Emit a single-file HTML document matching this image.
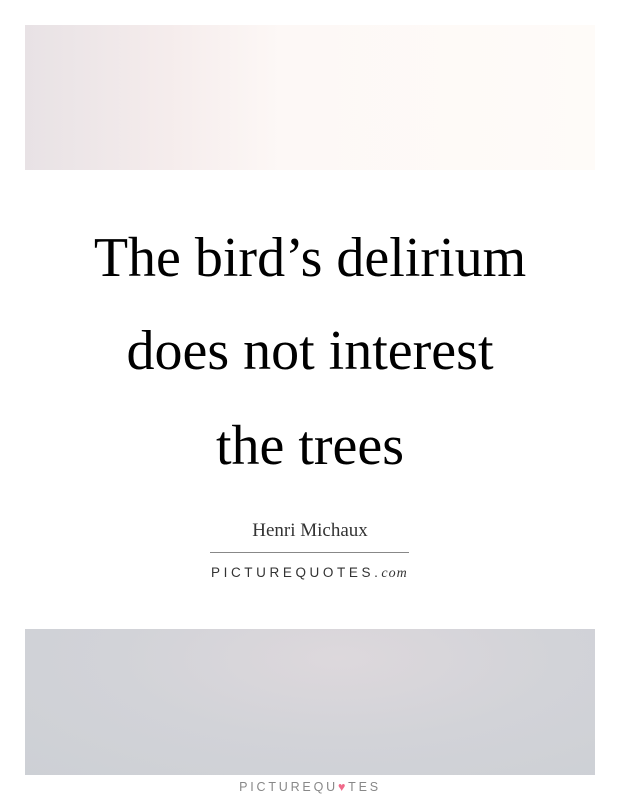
<!DOCTYPE html>
<html><head><meta charset="utf-8"><style>
html,body{margin:0;padding:0;background:#fff;width:620px;height:800px;overflow:hidden;position:relative}
.top{position:absolute;left:25px;top:25px;width:570px;height:145px;background:linear-gradient(90deg,#e8e2e5 0%,#f5ecec 25%,#fdf8f6 45%,#fefbf8 100%)}
.bot{position:absolute;left:25px;top:629px;width:570px;height:146px;background:radial-gradient(ellipse at 55% 20%,#ddd8dc 0%,#d2d3d8 50%,#cdd0d5 100%)}
.q{position:absolute;left:0;width:620px;text-align:center;font-family:"Liberation Serif",serif;font-size:56px;color:#000;line-height:60px}
.a{position:absolute;left:0;width:620px;top:520px;text-align:center;font-family:"Liberation Serif",serif;font-size:19px;color:#333}
.hr{position:absolute;left:210px;width:199px;top:552px;height:1px;background:#888}
.pq{position:absolute;left:211px;top:565px;font-family:"Liberation Sans",sans-serif;font-size:13.5px;letter-spacing:3.6px;color:#333}
.pq i{font-family:"Liberation Serif",serif;font-size:14px;letter-spacing:1px}
.ft{position:absolute;left:0;width:620px;top:780px;text-align:center;font-family:"Liberation Sans",sans-serif;font-size:12.5px;letter-spacing:2.8px;color:#888}
</style></head><body>
<div class="top"></div>
<div class="q" style="top:228px">The bird’s delirium</div>
<div class="q" style="top:321px">does not interest</div>
<div class="q" style="top:416px">the trees</div>
<div class="a">Henri Michaux</div>
<div class="hr"></div>
<div class="pq">PICTUREQUOTES<b style="font-weight:normal">.</b><i>com</i></div>
<div class="bot"></div>
<div class="ft">PICTUREQU<span style="color:#f06a8a">♥</span>TES</div>
</body></html>
